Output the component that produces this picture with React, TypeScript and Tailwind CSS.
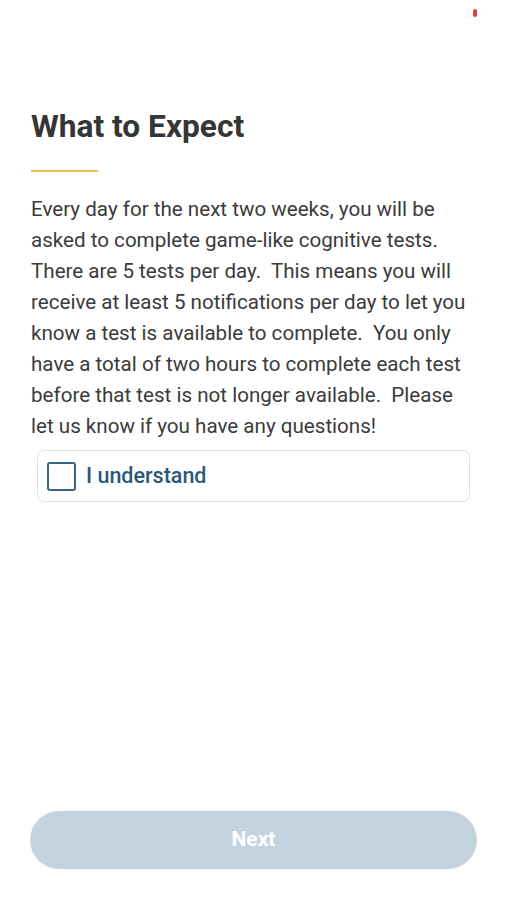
export default function App() {
  return (
    <div className="relative flex h-[900px] w-[507px] flex-col bg-white font-['Roboto',sans-serif]">
      <span className="absolute right-[30px] top-[9px] h-[8px] w-[4px] rounded-full bg-[#e0413a]" />

      <div className="flex flex-col px-[31px] pt-[106px]">
        <h1 className="text-[31.7px] font-bold leading-[42px] text-[#353535]">What to Expect</h1>
        <div className="mt-[22px] h-[2px] w-[67px] bg-[#f2c14e]" />
        <p className="mt-[22px] whitespace-nowrap text-[20.6px] leading-[31px] text-[#3b3b3b]">
          Every day for the next two weeks, you will be
          <br />
          asked to complete game-like cognitive tests.
          <br />
          There are 5 tests per day.&nbsp; This means you will
          <br />
          receive at least 5 notifications per day to let you
          <br />
          know a test is available to complete.&nbsp; You only
          <br />
          have a total of two hours to complete each test
          <br />
          before that test is not longer available.&nbsp; Please
          <br />
          let us know if you have any questions!
        </p>
      </div>

      <label className="mx-[37px] mt-[8px] flex h-[52px] items-center gap-[10px] rounded-[7px] border border-[#d6e1e8] px-[9px]">
        <span className="h-[29px] w-[29px] rounded-[3px] border-2 border-[#3a6685]" />
        <span className="text-[21.5px] font-medium text-[#2b5879]">I understand</span>
      </label>

      <div className="mt-auto px-[30px] pb-[31px]">
        <button
          type="button"
          className="flex h-[58px] w-full items-center justify-center rounded-full bg-[#c4d4df] text-[21px] font-bold text-white"
        >
          Next
        </button>
      </div>
    </div>
  );
}
